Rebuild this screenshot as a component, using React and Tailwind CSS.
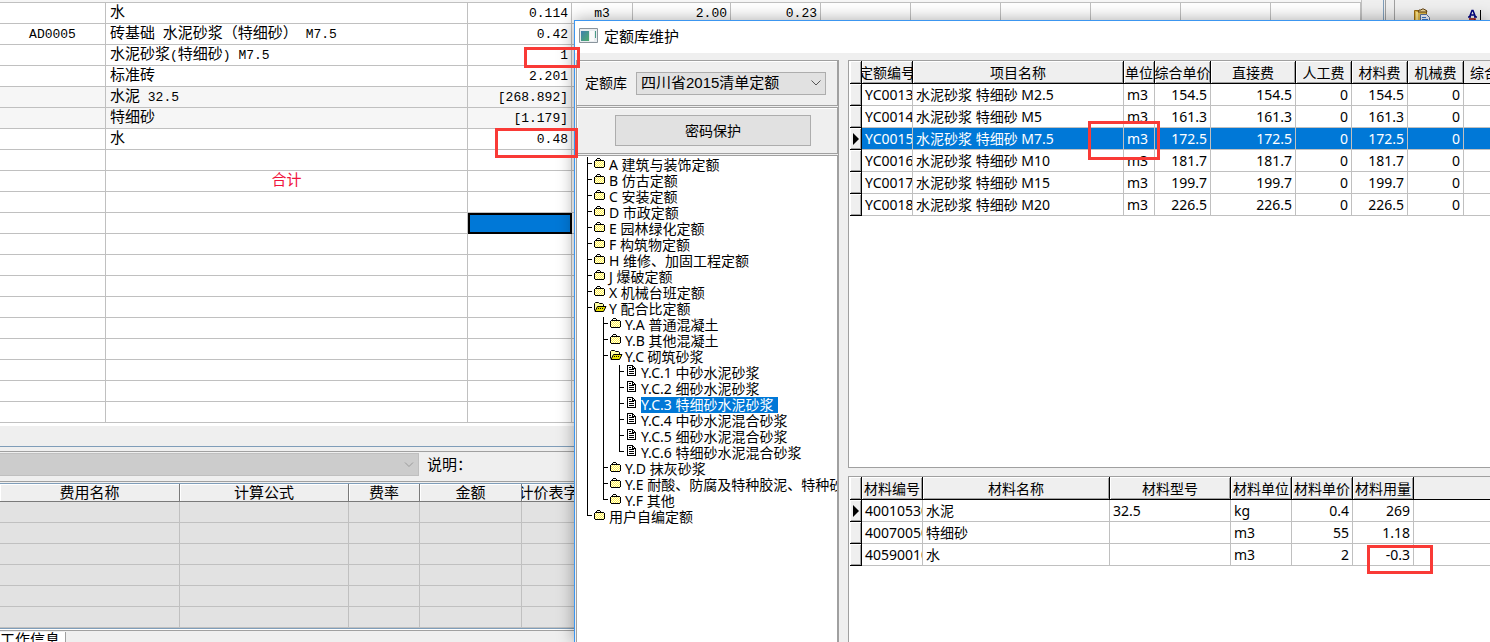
import React from "react";

const mono = "font-['Liberation_Mono','Noto_Sans_CJK_SC',monospace]";

function Mixed({ text }) {
  return text.split(/([\x20-\x7e]+)/).filter(Boolean).map((part, i) => (
    <span key={i} className={/^[\x20-\x7e]/.test(part) ? "text-[13px]" : "text-[15px]"}>{part}</span>
  ));
}

const ledger = [
  ["", "水", "0.114", "m3", "2.00", "0.23"],
  ["AD0005", "砖基础 水泥砂浆（特细砂） M7.5", "0.42"],
  ["", "水泥砂浆(特细砂) M7.5", "1"],
  ["", "标准砖", "2.201"],
  ["", "水泥 32.5", "[268.892]", "", "", "", "shade"],
  ["", "特细砂", "[1.179]", "", "", "", "shade"],
  ["", "水", "0.48"],
  [],
  ["", "合计"],
  [],
  ["", "", "selected"],
  [], [], [], [], [], [], [], [], [],
];

function Ledger() {
  return (
    <table className={`w-[1361px] table-fixed border-separate border-spacing-0 ${mono}`}>
      <colgroup>
        <col className="w-[106px]" />
        <col className="w-[362px]" />
        <col className="w-[104px]" />
        <col className="w-[61px]" />
        <col className="w-[98px]" />
        <col className="w-[90px]" />
        <col className="w-[90px]" />
        <col className="w-[90px]" />
        <col className="w-[90px]" />
        <col className="w-[90px]" />
        <col className="w-[90px]" />
        <col className="w-[90px]" />
      </colgroup>
      <tbody>
        {ledger.map((r, i) => (
          <tr key={i} className={r[6] ? "bg-[#f6f6f6]" : "bg-white"}>
            {Array.from({ length: 12 }, (_, c) => {
              const v = r[c] && c < 6 ? r[c] : "";
              const align = c === 0 || c === 3 ? "text-center" : c === 1 ? (v === "合计" ? "text-center text-[#f0143c]" : "pl-1") : "pr-[3px] text-right";
              if (v === "selected") {
                return <td key={c} className="h-[21px] border-2 border-black bg-[#0078d7] p-0" />;
              }
              return (
                <td key={c} className="h-[21px] border-r border-b border-[#c0c0c0] p-0">
                  <div className={`h-5 overflow-hidden text-[13px] leading-[22px] whitespace-nowrap ${align}`}><Mixed text={v} /></div>
                </td>
              );
            })}
          </tr>
        ))}
      </tbody>
    </table>
  );
}

function ToolCorner() {
  return (
    <div className="flex h-[426px] flex-1 border-l border-[#c0c0c0] bg-[#efefef]">
      <div className="ml-[21px] w-[3px] border-x border-l-[#7f9db9] border-r-[#a0a0a0]" />
      <div className="ml-2 flex flex-1 border-l border-[#a0a0a0]">
        <svg className="mt-2 ml-[19px] h-5 w-4 shrink-0" viewBox="0 0 16 20" aria-hidden="true">
          <path d="M.5 2.500h12v17H.5z" fill="#e0b848" stroke="#9a6a10" />
          <path d="M2 4h2v13H2z" fill="#f8e08a" />
          <path d="M4 4 5 2h2l1-1h2l1 1h1l1 2z" fill="#e9d39a" stroke="#604010" />
          <path d="M6.500 6.500h6l3 3v9h-9z" fill="#eef3ff" stroke="#58719c" />
          <path d="M8 9.500h4M8 11.500h6M8 13.500h5" stroke="#3977c8" />
        </svg>
        <svg className="mt-2 ml-[38px] h-5 w-4 shrink-0" viewBox="0 0 16 20" aria-hidden="true">
          <path d="M1.500 9 4 2.500h1L7.500 9M2.500 7h4M0 9h3M6 9h3" fill="none" stroke="#000080" strokeWidth="1.500" />
          <path d="M1 11h6v1L2 18h6" fill="none" stroke="#900000" strokeWidth="1.500" />
          <path d="M12.500 2v16" stroke="#000" />
        </svg>
      </div>
    </div>
  );
}

const feeCols = [
  ["费用名称", "w-[180px]"],
  ["计算公式", "w-[169px]"],
  ["费率", "w-[71px]"],
  ["金额", "w-[102px]"],
  ["计价表字", "w-[54px]"],
  ["", ""],
];

function FeePanel() {
  return (
    <section className={`bg-[#efefef] text-[15px] ${mono}`}>
      <div className="h-5" />
      <div className="h-[5px] border-t border-[#7f9db9]" />
      <div className="flex h-[31px] border-y border-[#a0a0a0] pt-px">
        <div className="relative h-[23px] w-[419px]">
          <select aria-label="费用模板" disabled className="h-full w-full appearance-none border border-l-0 border-[#bfbfbf] bg-[#ccc]" />
          <svg className="absolute top-[9px] right-[5px] h-[6px] w-[10px]" viewBox="0 0 10 6" aria-hidden="true">
            <path d="m1 .5 4 4 4-4" fill="none" stroke="#9a9a9a" />
          </svg>
        </div>
        <span className="ml-2 leading-7">说明：</span>
      </div>
      <table className="mt-px w-full table-fixed border-separate border-spacing-0 border-t border-[#7f9db9]">
        <colgroup>{feeCols.map((c, i) => <col key={i} className={c[1]} />)}</colgroup>
        <thead>
          <tr>
            {feeCols.map((c, i) => (
              <th key={i} className="h-[18px] border-r border-b border-[#7a7a7a] bg-[#efefef] p-0 font-normal shadow-[inset_1px_1px_0_#fff]">
                <div className="flex h-[17px] justify-center overflow-hidden leading-[21px] whitespace-nowrap"><span className="shrink-0">{c[0]}</span></div>
              </th>
            ))}
          </tr>
        </thead>
        <tbody>
          {[0, 1, 2, 3, 4, 5].map((i) => (
            <tr key={i} className="bg-[#e2e2e2]">
              {feeCols.map((c, k) => <td key={k} className="h-[21px] border-r border-b border-[#c0c0c0] p-0" />)}
            </tr>
          ))}
        </tbody>
      </table>
      <div className="h-[3px] border-y border-t-[#7f9db9] border-b-[#a0a0a0] bg-white" />
      <button className="h-5 w-[66px] overflow-hidden border-r border-[#a0a0a0] bg-white text-left leading-[18px] whitespace-nowrap">工作信息</button>
    </section>
  );
}

const tree = [
  [0, "A 建筑与装饰定额"],
  [0, "B 仿古定额"],
  [0, "C 安装定额"],
  [0, "D 市政定额"],
  [0, "E 园林绿化定额"],
  [0, "F 构筑物定额"],
  [0, "H 维修、加固工程定额"],
  [0, "J 爆破定额"],
  [0, "X 机械台班定额"],
  [0, "Y 配合比定额", "open"],
  [1, "Y.A 普通混凝土"],
  [1, "Y.B 其他混凝土"],
  [1, "Y.C 砌筑砂浆", "open"],
  [2, "Y.C.1 中砂水泥砂浆"],
  [2, "Y.C.2 细砂水泥砂浆"],
  [2, "Y.C.3 特细砂水泥砂浆", "selected"],
  [2, "Y.C.4 中砂水泥混合砂浆"],
  [2, "Y.C.5 细砂水泥混合砂浆"],
  [2, "Y.C.6 特细砂水泥混合砂浆", "last"],
  [1, "Y.D 抹灰砂浆"],
  [1, "Y.E 耐酸、防腐及特种胶泥、特种砂浆"],
  [1, "Y.F 其他", "last"],
  [0, "用户自编定额", "last"],
];

function FolderIcon() {
  return (
    <svg className="mb-1 h-3 w-3 shrink-0" viewBox="0 0 12 12" shapeRendering="crispEdges" aria-hidden="true">
      <path d="M1 3h1V2h1V1h3v1h1v1h3v1h1v6h-1v1H1v-1H0V4h1z" fill="#000" />
      <path d="M1 4h9v6H1zM3 2h3v1H3z" fill="#fffff0" />
      <path d="M2 4.500h8M2 6.500h8M2 8.500h8" stroke="#fff04a" strokeDasharray="1 1" />
      <path d="M1 5.500h9M1 7.500h9M1 9.500h9" stroke="#fff04a" strokeDasharray="1 1" />
    </svg>
  );
}

function OpenFolderIcon() {
  return (
    <svg className="mb-1 h-3 w-3 shrink-0 overflow-visible" viewBox="0 0 12 12" aria-hidden="true">
      <path d="M.5 9.500v-7l1-1h3l1 1h3l1 1v2" fill="#ffffa0" stroke="#000" />
      <path d="M1 10.500 3.500 5.500h8.500l-2.500 5z" fill="#e8e000" stroke="#000" />
      <path d="M4 7.500h6" stroke="#000" strokeDasharray="1 1" />
    </svg>
  );
}

function PageIcon() {
  return (
    <svg className="mb-1 ml-px h-3 w-[10px] shrink-0" viewBox="0 0 10 12" shapeRendering="crispEdges" aria-hidden="true">
      <path d="M.5.5h5l3 3v7h-8z" fill="#fff" stroke="#000" />
      <path d="M5.500.5v3h3M2 2.500h2M2 4.500h5M2 6.500h5M2 8.500h5" fill="none" stroke="#000" />
    </svg>
  );
}

function TreeRow({ depth, label, state }) {
  const last = state === "last";
  const bars = [];
  for (let d = 0; d <= depth; d++) {
    const own = d === depth;
    const end = own && last ? 7 : 16;
    bars.push(<path key={d} d={`M${d * 16 + 0.5} 0V${end}${own ? `M${d * 16} 6.500h5` : ""}`} stroke="#000" />);
  }
  return (
    <li className="flex h-4 items-center whitespace-nowrap">
      <svg className={`h-4 shrink-0 ${["w-[7px]", "w-[23px]", "w-[39px]"][depth]}`} shapeRendering="crispEdges" aria-hidden="true">{bars}</svg>
      {depth === 2 ? <PageIcon /> : state === "open" ? <OpenFolderIcon /> : <FolderIcon />}
      <button className={`h-4 leading-4 ${depth === 2 ? "ml-1" : "ml-[3px]"} ${state === "selected" ? "bg-[#0078d7] pr-[5px] text-white" : ""}`}>{label}</button>
    </li>
  );
}

const bevel = "shadow-[inset_1px_1px_0_#fff,inset_-1px_-1px_0_#a0a0a0]";

function Grid({ cols, rows, current, selected }) {
  return (
    <table className="w-full table-fixed border-separate border-spacing-0">
      <colgroup>
        <col className="w-3" />
        {cols.map((c, i) => <col key={i} className={c[1]} />)}
      </colgroup>
      <thead>
        <tr>
          <th className={`h-[23px] border-r border-b border-black bg-[#efefef] p-0 ${bevel}`} />
          {cols.map((c, i) => (
            <th key={i} className={`h-[23px] border-b border-black bg-[#efefef] p-0 font-normal ${i < cols.length - 1 ? "border-r " + bevel : ""}`}>
              <div className={`flex h-[22px] overflow-hidden leading-6 whitespace-nowrap ${i === cols.length - 1 ? "pl-[6px]" : "justify-center"}`}><span className="shrink-0">{c[0]}</span></div>
            </th>
          ))}
        </tr>
      </thead>
      <tbody>
        {rows.map((r, ri) => (
          <tr key={ri} className={selected === ri ? "bg-[#0078d7] text-white" : "bg-white"}>
            <td className={`h-[22px] border-r border-b border-black bg-[#efefef] p-0 ${bevel}`}>
              {current === ri && (
                <svg className="ml-[3px] h-3 w-[6px]" viewBox="0 0 6 12" aria-hidden="true"><path d="M0 0v12l6-6z" /></svg>
              )}
            </td>
            {cols.map((c, ci) => (
              <td key={ci} className={`h-[22px] overflow-hidden border-b border-[#c0c0c0] p-0 leading-[21px] whitespace-nowrap ${ci < cols.length - 1 ? "border-r" : ""} ${c[2] ? "pr-[3px] text-right" : "pl-[3px]"}`}>{r[ci]}</td>
            ))}
          </tr>
        ))}
      </tbody>
    </table>
  );
}

const quotaCols = [
  ["定额编号", "w-[51px]"],
  ["项目名称", "w-[211px]"],
  ["单位", "w-[31px]"],
  ["综合单价", "w-[56px]", true],
  ["直接费", "w-[85px]", true],
  ["人工费", "w-[56px]", true],
  ["材料费", "w-[56px]", true],
  ["机械费", "w-[56px]", true],
  ["综合", ""],
];
const quotaRows = [
  ["YC0013", "M2.5", "154.5"],
  ["YC0014", "M5", "161.3"],
  ["YC0015", "M7.5", "172.5"],
  ["YC0016", "M10", "181.7"],
  ["YC0017", "M15", "199.7"],
  ["YC0018", "M20", "226.5"],
].map(([id, grade, price]) => [id, `水泥砂浆 特细砂 ${grade}`, "m3", price, price, "0", price, "0", ""]);

const materialCols = [
  ["材料编号", "w-[61px]"],
  ["材料名称", "w-[187px]"],
  ["材料型号", "w-[121px]"],
  ["材料单位", "w-[61px]"],
  ["材料单价", "w-[61px]", true],
  ["材料用量", "w-[61px]", true],
  ["", ""],
];
const materialRows = [
  ["40010530", "水泥", "32.5", "kg", "0.4", "269", ""],
  ["40070050", "特细砂", "", "m3", "55", "1.18", ""],
  ["40590010", "水", "", "m3", "2", "-0.3", ""],
];

function QuotaDialog() {
  return (
    <div role="dialog" aria-labelledby="dialog-title" className="absolute top-5 right-0 bottom-0 left-[574px] flex flex-col border-t border-l border-[#3c96f0] bg-[#efefef] font-['Noto_Sans','Noto_Sans_CJK_SC',sans-serif] text-sm text-black shadow-[0_0_16px_rgba(0,0,0,0.35)]">
      <header className="flex h-8 shrink-0 items-center gap-[6px] bg-white pb-[3px] pl-1">
        <svg className="h-[15px] w-[19px]" viewBox="0 0 19 15" aria-hidden="true">
          <defs>
            <linearGradient id="pane" x2="1" y2="1"><stop stopColor="#3f7fb0" /><stop offset="1" stopColor="#4fae6c" /></linearGradient>
          </defs>
          <path d="M.5.5h18v14H.5z" fill="#e9edf0" stroke="#8a949c" />
          <path d="M2 3h8v10H2z" fill="url(#pane)" />
          <path d="M11 3h4v10h-4z" fill="#fafafa" />
          <path d="M16 3h1v7h-1z" fill="#4b9c86" />
        </svg>
        <h1 id="dialog-title" className="text-[15px] leading-5">定额库维护</h1>
      </header>
      <div className="flex min-h-0 flex-1 pt-[7px] pl-px">
        <div className="flex w-[263px] shrink-0 flex-col gap-px border-r border-l border-[#a0a0a0]">
          <div className="flex h-[46px] shrink-0 items-center border border-l-0 border-[#a0a0a0] pl-2 shadow-[inset_1px_1px_0_#fff]">
            <label htmlFor="library" className="w-[51px]">定额库</label>
            <div className="relative h-[23px] w-[190px]">
              <select id="library" className="h-full w-full appearance-none border border-[#adadad] bg-[#e1e1e1] pl-1 font-['Liberation_Sans','Noto_Sans_CJK_SC',sans-serif] text-[15px] leading-5">
                <option>四川省2015清单定额</option>
              </select>
              <svg className="pointer-events-none absolute top-2 right-[5px] h-[6px] w-[10px]" viewBox="0 0 10 6" aria-hidden="true">
                <path d="m.5.5 4.500 4.500L9.500.5" fill="none" stroke="#555" />
              </svg>
            </div>
          </div>
          <div className="flex h-[47px] shrink-0 items-center border border-l-0 border-[#a0a0a0] pl-[38px] shadow-[inset_1px_1px_0_#fff]">
            <button className="h-[31px] w-[196px] border border-[#adadad] bg-[#e1e1e1]">密码保护</button>
          </div>
          <ul className="min-h-0 flex-1 overflow-hidden border-t border-r border-[#a0a0a0] bg-white pt-px pl-[10px]">
            {tree.map(([depth, label, state]) => <TreeRow key={label} depth={depth} label={label} state={state} />)}
          </ul>
        </div>
        <div className="ml-[9px] flex min-w-0 flex-1 flex-col gap-2">
          <div className="h-[408px] shrink-0 overflow-hidden border-y border-l border-[#a0a0a0] bg-white pl-px">
            <Grid cols={quotaCols} rows={quotaRows} current={2} selected={2} />
          </div>
          <div className="min-h-0 flex-1 overflow-hidden border-t border-l border-[#a0a0a0] bg-white pl-px">
            <Grid cols={materialCols} rows={materialRows} current={0} />
          </div>
        </div>
      </div>
    </div>
  );
}

const marks = [
  "top-[47px] left-[524px] h-[21px] w-14",
  "top-[128px] left-[495px] h-[30px] w-[83px]",
  "top-[121px] left-[1088px] h-[39px] w-[72px]",
  "top-[545px] left-[1367px] h-[29px] w-[66px]",
];

export default function App() {
  return (
    <main className="relative h-screen overflow-hidden bg-[#efefef] text-black">
      <div className="flex h-[426px] overflow-hidden bg-white">
        <div className="shrink-0">
          <div className="h-[3px] border-b border-[#c0c0c0] bg-[#f6f6f6]" />
          <Ledger />
        </div>
        <ToolCorner />
      </div>
      <FeePanel />
      <QuotaDialog />
      {marks.map((m) => <div key={m} className={`pointer-events-none absolute border-3 border-[#f93a36] ${m}`} />)}
    </main>
  );
}
